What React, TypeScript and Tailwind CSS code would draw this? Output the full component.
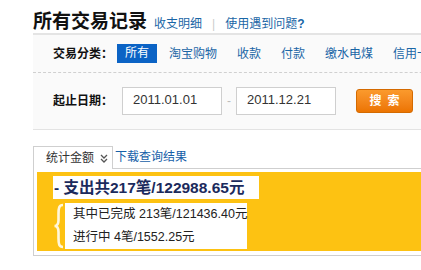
export default function App() {
  const cats = ["淘宝购物", "收款", "付款", "缴水电煤", "信用卡还款"];

  return (
    <div className="w-[421px] h-[270px] overflow-hidden bg-white pl-[33px] font-['Liberation_Sans','Noto_Sans_CJK_SC',sans-serif] text-[12px] text-[#333]">
      <div className="w-[460px]">
        {/* header */}
        <div className="flex items-baseline h-[33px] pt-[10px]">
          <h1 className="text-[19px] leading-[20px] font-bold text-[#111] font-['Noto_Sans_CJK_SC',serif]">所有交易记录</h1>
          <a className="ml-[7px] text-[#1a66a6]">收支明细</a>
          <span className="mx-[10px] text-[#ccc]">|</span>
          <a className="text-[#1a66a6]">
            使用遇到问题<b>?</b>
          </a>
        </div>
        <div className="h-[2px] bg-[#e4e4e4]" />

        <div className="bg-[#fafafa]">
          {/* category */}
          <div className="flex items-center h-[38px] pl-[20px] border-b border-dashed border-[#d0d0d0] whitespace-nowrap">
            <span className="font-bold text-[#111]">交易分类：</span>
            <span className="ml-[4px] px-[8px] h-[19px] leading-[19px] bg-[#0b63c5] text-white">所有</span>
            {cats.map((c, i) => (
              <a key={c} className={`${i === 0 ? "ml-[12px]" : "ml-[20px]"} text-[#1a66a6]`}>
                {c}
              </a>
            ))}
          </div>

          {/* dates */}
          <div className="flex items-center h-[57px] pl-[20px] border-b border-[#e3e3e3]">
            <span className="font-bold text-[#111]">起止日期：</span>
            <div className="ml-[9px] w-[100px] h-[28px] border border-[#cfcfcf] bg-white pl-[10px] leading-[24px] text-[13px] text-[#333]">
              2011.01.01
            </div>
            <span className="w-[14px] text-center text-[#bbb]">-</span>
            <div className="w-[100px] h-[28px] border border-[#cfcfcf] bg-white pl-[10px] leading-[24px] text-[13px] text-[#333]">
              2011.12.21
            </div>
            <button className="ml-[20px] w-[57px] h-[24px] rounded-[3px] border border-[#d46a00] bg-gradient-to-b from-[#fb9a2c] to-[#ec7400] text-white font-bold text-[12px] leading-[22px] tracking-[6px] pl-[6px]">
              搜索
            </button>
          </div>
        </div>

        {/* tabs */}
        <div className="flex items-end mt-[16px]">
          <div className="relative z-10 -mb-px flex items-center h-[23px] w-[80px] pl-[12px] border border-b-0 border-[#cfcfcf] bg-white text-[#333]">
            统计金额
            <svg width="8" height="9" viewBox="0 0 8 9" className="ml-[6px]">
              <path d="M1 1 L4 4 L7 1 M1 5 L4 8 L7 5" fill="none" stroke="#555" strokeWidth="1.3" />
            </svg>
          </div>
          <a className="ml-[2px] mb-[2px] text-[#1660a8]">下载查询结果</a>
        </div>

        {/* summary */}
        <div className="border border-[#cfcfcf] p-[3px] pb-[4px]">
          <div className="bg-[#fdc212] pl-[16px] pt-[4px] pb-[2px]">
            <div className="w-[206px] h-[23px] bg-white pl-[1px] leading-[23px] text-[15.5px] font-bold text-[#1b2a5c] whitespace-nowrap">
              - 支出共217笔/122988.65元
            </div>
            <div className="flex mt-[4px]">
              <svg width="12" height="46" viewBox="0 0 12 46">
                <path
                  d="M10 2 C6 2 5.5 5 5.5 11 L5.5 17 C5.5 21 4 23 1.5 23 C4 23 5.5 25 5.5 29 L5.5 35 C5.5 41 6 44 10 44"
                  fill="none"
                  stroke="#fff7dc"
                  strokeWidth="2.6"
                />
              </svg>
              <div className="w-[182px] h-[46px] bg-white pl-[8px] text-[12.5px] leading-[23px] text-[#222] whitespace-nowrap">
                <div>其中已完成 213笔/121436.40元</div>
                <div>进行中 4笔/1552.25元</div>
              </div>
            </div>
          </div>
        </div>
      </div>
    </div>
  );
}
